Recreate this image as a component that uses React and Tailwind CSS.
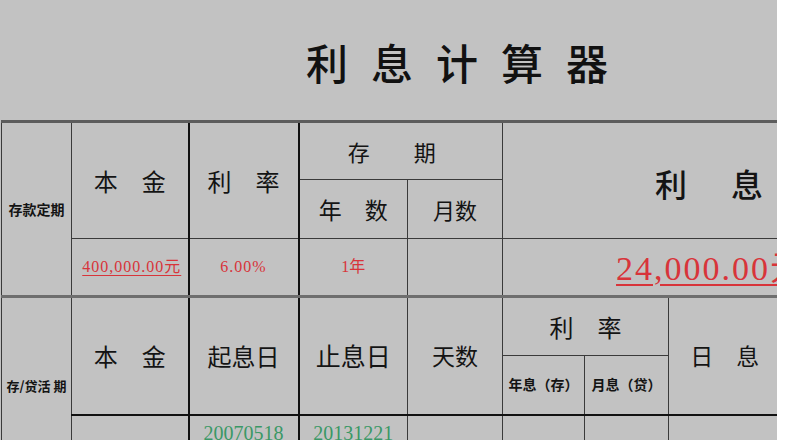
import React from 'react';

const base = "border border-[#3a3a3a] p-0 text-center align-middle";
const cell = `${base} font-['Noto_Sans_CJK_SC',sans-serif] text-[#141414]`;
const thick = "border-r-2 border-r-[#111]";
const head = "text-[24px] leading-none";
const red = `${base} font-['Liberation_Serif','Noto_Sans_CJK_SC',serif] text-[#d8343a]`;
const green = `${base} font-['Liberation_Serif',serif] text-[20px] leading-none text-[#3a9866] align-top pt-[7px]`;
const sep = "border-t-[3px] border-t-[#6e6e6e]";
const top = "border-t-[3px] border-t-[#5c5c5c]";
const bot = "border-t-2 border-t-[#111]";

export default function App() {
    return (
        <div className="w-[800px] h-[440px] overflow-hidden bg-white">
            <div className="w-[777px] h-[440px] overflow-hidden bg-[#c2c2c2]">
                <div className="h-[120px] flex items-center pl-[306px] pt-[4px] text-[42px] font-medium tracking-[23px] leading-none text-[#111] font-['Noto_Sans_CJK_SC',sans-serif]">
                    利息计算器
                </div>
                <table className="table-fixed border-collapse w-[776px] ml-[1px]">
                    <colgroup>
                        <col className="w-[70px]" />
                        <col className="w-[117px]" />
                        <col className="w-[110px]" />
                        <col className="w-[109px]" />
                        <col className="w-[95px]" />
                        <col className="w-[82px]" />
                        <col className="w-[84px]" />
                        <col className="w-[109px]" />
                    </colgroup>
                    <tbody>
                        {/* 存款定期 */}
                        <tr className="h-[58px]">
                            <td rowSpan={3} className={`${cell} ${top} text-[14px] font-bold`}>存款定期</td>
                            <td rowSpan={2} className={`${cell} ${top} ${thick} ${head}`}>本　金</td>
                            <td rowSpan={2} className={`${cell} ${top} ${thick} ${head}`}>利　率</td>
                            <td colSpan={2} className={`${cell} ${top} text-[22px] leading-none pr-[18px]`}>存　　期</td>
                            <td rowSpan={2} colSpan={3} className={`${cell} ${top} border-r-0 text-left pl-[152px] pt-[4px] text-[32px] font-medium tracking-[6px] leading-none`}>利　息</td>
                        </tr>
                        <tr className="h-[59px]">
                            <td className={`${cell} text-[23px] leading-none`}>年　数</td>
                            <td className={`${cell} text-[22px] leading-none`}>月数</td>
                        </tr>
                        <tr className="h-[58px]">
                            <td className={`${red} ${thick} text-[16px] tracking-[1px] pl-[4px]`}>
                                <span className="underline underline-offset-[3px] decoration-1">400,000.00元</span>
                            </td>
                            <td className={`${red} ${thick} text-[16px] tracking-[1px]`}>6.00%</td>
                            <td className={`${red} text-[16px]`}>1年</td>
                            <td className={cell}></td>
                            <td colSpan={3} className={`${red} border-r-0 text-left pl-[113px] pt-[4px] whitespace-nowrap text-[34px] tracking-[2px] leading-none`}>
                                <span className="underline underline-offset-[4px] decoration-2">24,000.00元</span>
                            </td>
                        </tr>

                        {/* 存/贷活期 */}
                        <tr className="h-[59px]">
                            <td rowSpan={3} className={`${cell} ${sep} text-[13px] font-bold align-top pt-[78px]`}>存/贷活 期</td>
                            <td rowSpan={2} className={`${cell} ${sep} ${thick} ${head}`}>本　金</td>
                            <td rowSpan={2} className={`${cell} ${sep} ${thick} ${head}`}>起息日</td>
                            <td rowSpan={2} className={`${cell} ${sep} text-[25px] leading-none`}>止息日</td>
                            <td rowSpan={2} className={`${cell} ${sep} text-[23px] leading-none`}>天数</td>
                            <td colSpan={2} className={`${cell} ${sep} ${head}`}>利　率</td>
                            <td rowSpan={2} className={`${cell} ${sep} border-r-2 border-r-[#222] text-[23px] leading-none pl-[4px]`}>日　息</td>
                        </tr>
                        <tr className="h-[59px]">
                            <td className={`${cell} text-[14px] font-bold`}>年息（存）</td>
                            <td className={`${cell} text-[14px] font-bold`}>月息（贷）</td>
                        </tr>
                        <tr className="h-[59px]">
                            <td className={`${cell} ${bot} ${thick}`}></td>
                            <td className={`${green} ${bot} ${thick}`}>20070518</td>
                            <td className={`${green} ${bot}`}>20131221</td>
                            <td className={`${cell} ${bot}`}></td>
                            <td className={`${cell} ${bot}`}></td>
                            <td className={`${cell} ${bot}`}></td>
                            <td className={`${cell} ${bot} border-r-2 border-r-[#222]`}></td>
                        </tr>
                    </tbody>
                </table>
            </div>
        </div>
    );
}
